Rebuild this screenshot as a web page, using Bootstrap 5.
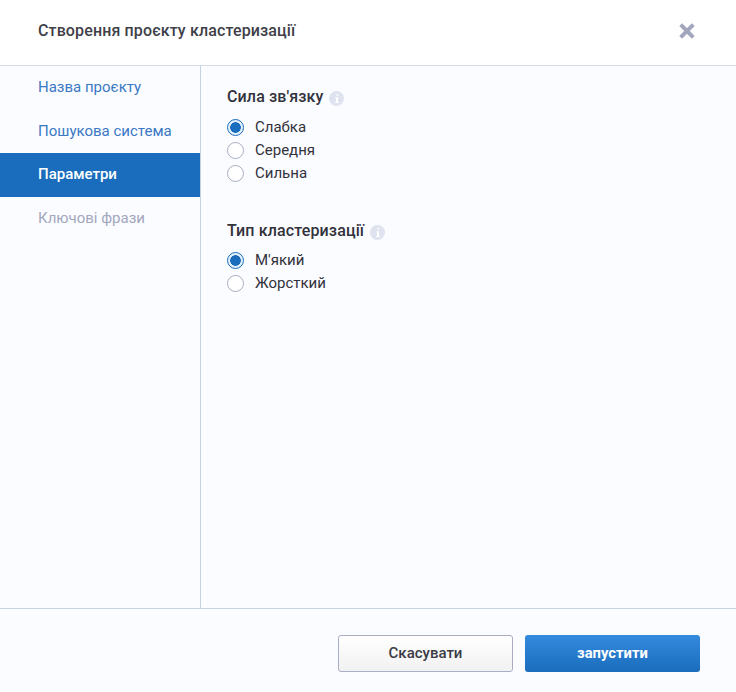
<!DOCTYPE html>
<html lang="uk">
<head>
    <meta charset="UTF-8">
    <meta name="viewport" content="width=device-width, initial-scale=1.0">
    <title>Створення проєкту кластеризації</title>
    <link href="https://cdn.jsdelivr.net/npm/bootstrap@5.3.2/dist/css/bootstrap.min.css" rel="stylesheet">
    <style>
        html, body {
            height: 100%;
        }

        body {
            background: #fbfcff;
            font-family: Roboto, "Liberation Sans", sans-serif;
            font-size: 15px;
            color: #32323c;
        }

        .dialog {
            height: 692px;
        }

        .dialog-head {
            height: 66px;
            padding: 0 41px 3px 38px;
            background: #fff;
            border-bottom: 1px solid #d5dce9;
        }

        .dialog-title {
            font-size: 16px;
            font-weight: 500;
            letter-spacing: .13px;
            color: #3e3f49;
            margin: 0;
        }

        .close-x {
            display: block;
            width: 16px;
            height: 16px;
            padding: 0;
            border: 0;
            background: none;
        }

        .close-x svg {
            display: block;
        }

        .dialog-main {
            min-height: 0;
        }

        .side-menu {
            width: 201px;
            flex: none;
            border-right: 1px solid #c5d2e4;
        }

        .side-item {
            display: block;
            height: 43.7px;
            line-height: 42px;
            padding-left: 38px;
            color: #3a78c4;
            text-decoration: none;
        }

        .side-item.is-active {
            background: #1a6dbc;
            color: #fff;
            font-weight: 500;
            width: 200px;
        }

        .side-item.is-off {
            color: #a2a7bd;
        }

        .settings {
            padding: 20px 26px;
        }

        .group-title {
            font-size: 16px;
            font-weight: 500;
            line-height: 22px;
            letter-spacing: .13px;
            color: #32323c;
            margin-bottom: 8px;
        }

        .group-title.is-tight {
            margin-bottom: 7px;
        }

        .info-dot {
            display: inline-block;
            width: 15px;
            height: 15px;
            margin-left: 1.5px;
            vertical-align: -3.5px;
        }

        .settings .form-check {
            min-height: 0;
            height: 23px;
            line-height: 23px;
            padding-left: 28px;
            margin: 0;
        }

        .settings .form-check-input {
            width: 17px;
            height: 17px;
            margin-top: 3px;
            margin-left: -28px;
            border: 1px solid #a9adc3;
            background-color: #fff;
        }

        .settings .form-check-input:checked {
            border: 1.5px solid #1a6dbc;
            background-color: #e3effa;
            background-image: radial-gradient(circle, #1a6dbc 0, #1a6dbc 5px, transparent 5.6px);
        }

        .settings .form-check-label {
            color: #32323c;
        }

        .group-gap {
            margin-bottom: 35px;
        }

        .dialog-foot {
            height: 84px;
            flex: none;
            padding: 26px 36px 0 0;
            border-top: 1px solid #c5d2e4;
        }

        .act-btn {
            width: 175px;
            height: 37px;
            padding: 0;
            font-size: 15px;
            font-weight: 500;
            border-radius: 3px;
        }

        .act-cancel {
            background: linear-gradient(to bottom, #fff, #f1f1f1);
            border: 1px solid #a9adc3;
            color: #3a3b45;
        }

        .act-run {
            background: linear-gradient(to bottom, #348ade, #1a6dbc);
            border: 0;
            color: #fff;
            font-weight: 700;
            font-size: 14.8px;
        }
    </style>
</head>
<body>
    <div class="dialog d-flex flex-column">
        <!-- Header -->
        <div class="dialog-head d-flex align-items-center justify-content-between flex-shrink-0">
            <h1 class="dialog-title">Створення проєкту кластеризації</h1>
            <button class="close-x" type="button" aria-label="Закрити">
                <svg width="16" height="16" viewBox="0 0 16 16"><path d="M1.700 1.700 14.300 14.300M14.300 1.700 1.700 14.300" stroke="#a2a7bd" stroke-width="4" fill="none"/></svg>
            </button>
        </div>

        <div class="dialog-main d-flex flex-grow-1">
            <!-- Steps -->
            <nav class="side-menu">
                <a class="side-item" href="#">Назва проєкту</a>
                <a class="side-item" href="#">Пошукова система</a>
                <a class="side-item is-active" href="#">Параметри</a>
                <a class="side-item is-off" href="#">Ключові фрази</a>
            </nav>

            <!-- Options -->
            <div class="settings flex-grow-1">
                <div class="group-gap">
                    <div class="group-title">Сила зв'язку
                        <svg class="info-dot" viewBox="0 0 15 15"><circle cx="7.5" cy="7.5" r="7.5" fill="#dfe3ef"/><path d="M7.600 3h1.600v1.700H7.600zM6.400 6.300h2.600v4.600h.9V12H6v-1.100h1V7.400h-.6z" fill="#fff"/></svg>
                    </div>
                    <div class="form-check">
                        <input class="form-check-input" type="radio" name="strength" id="s1" checked>
                        <label class="form-check-label" for="s1">Слабка</label>
                    </div>
                    <div class="form-check">
                        <input class="form-check-input" type="radio" name="strength" id="s2">
                        <label class="form-check-label" for="s2">Середня</label>
                    </div>
                    <div class="form-check">
                        <input class="form-check-input" type="radio" name="strength" id="s3">
                        <label class="form-check-label" for="s3">Сильна</label>
                    </div>
                </div>
                <div>
                    <div class="group-title is-tight">Тип кластеризації
                        <svg class="info-dot" viewBox="0 0 15 15"><circle cx="7.5" cy="7.5" r="7.5" fill="#dfe3ef"/><path d="M7.600 3h1.600v1.700H7.600zM6.400 6.300h2.600v4.600h.9V12H6v-1.100h1V7.400h-.6z" fill="#fff"/></svg>
                    </div>
                    <div class="form-check">
                        <input class="form-check-input" type="radio" name="kind" id="k1" checked>
                        <label class="form-check-label" for="k1">М'який</label>
                    </div>
                    <div class="form-check">
                        <input class="form-check-input" type="radio" name="kind" id="k2">
                        <label class="form-check-label" for="k2">Жорсткий</label>
                    </div>
                </div>
            </div>
        </div>

        <!-- Footer -->
        <div class="dialog-foot d-flex justify-content-end align-items-start gap-2">
            <button class="btn act-btn act-cancel me-1" type="button">Скасувати</button>
            <button class="btn act-btn act-run" type="button">запустити</button>
        </div>
    </div>

    <script src="https://cdn.jsdelivr.net/npm/bootstrap@5.3.2/dist/js/bootstrap.bundle.min.js"></script>
</body>
</html>
